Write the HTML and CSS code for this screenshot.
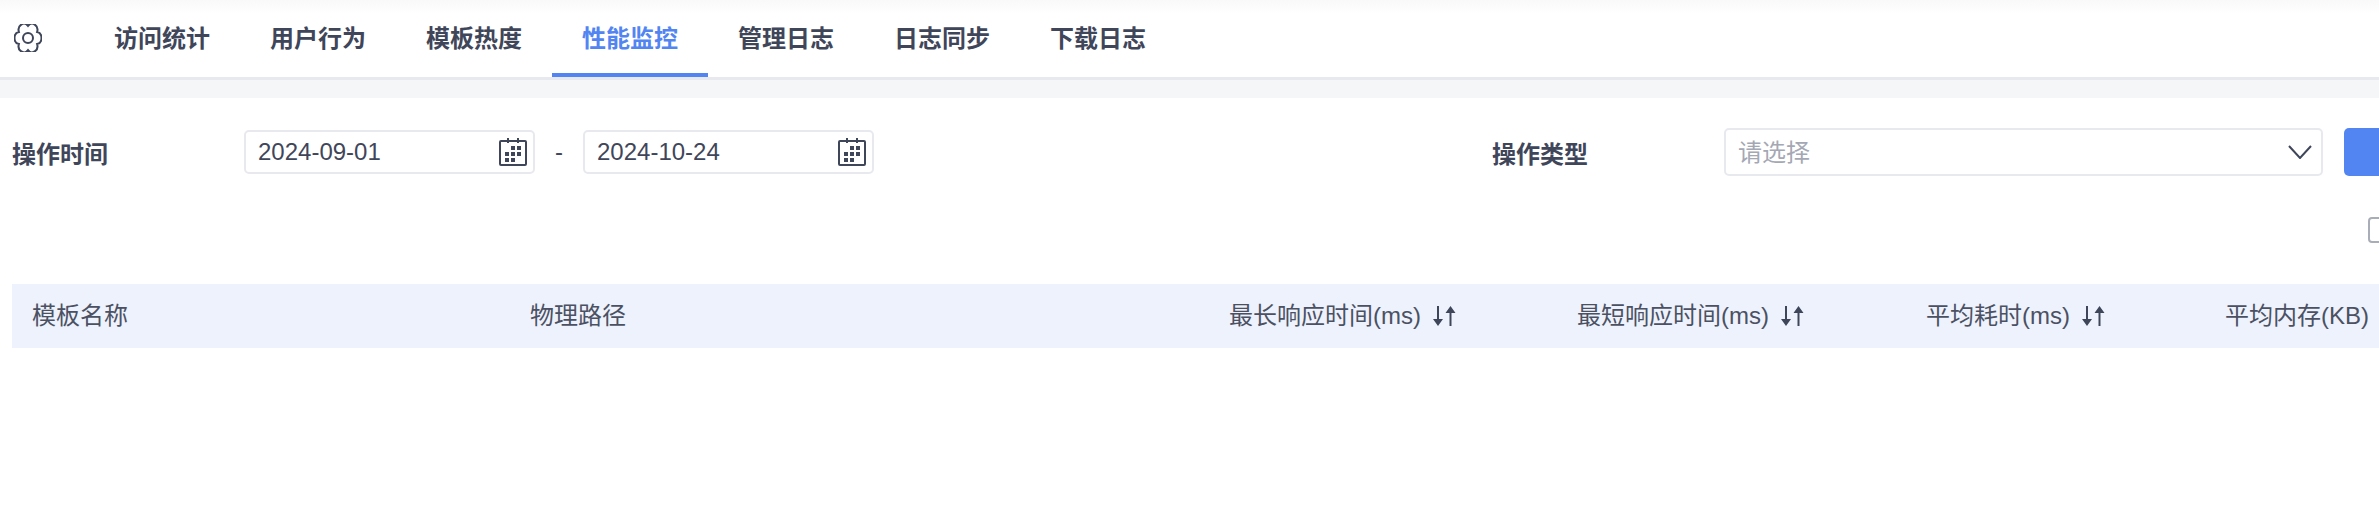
FILE: index.html
```html
<!DOCTYPE html>
<html lang="zh-CN">
  <head>
    <meta charset="UTF-8" />
    <title>性能监控</title>
    <link rel="stylesheet" href="styles.css">
  </head>
  <body>
    <div class="top-nav">
      <svg class="gear-icon" width="28" height="28" viewBox="0 0 28 28">
        <path d="M23.09 7.96A5.33 6.13 0 0 1 23.09 20.04A5.33 6.13 0 0 1 14 26.08A5.33 6.13 0 0 1 4.91 20.04A5.33 6.13 0 0 1 4.91 7.96A5.33 6.13 0 0 1 14 1.92A5.33 6.13 0 0 1 23.09 7.96Z" />
        <circle cx="14" cy="14" r="5" />
      </svg>
      <div class="nav-item">访问统计</div>
      <div class="nav-item">用户行为</div>
      <div class="nav-item">模板热度</div>
      <div class="nav-item active">性能监控</div>
      <div class="nav-item">管理日志</div>
      <div class="nav-item">日志同步</div>
      <div class="nav-item">下载日志</div>
    </div>
    <div class="band"></div>

    <div class="filter-row">
      <div class="filter-label">操作时间</div>
      <div class="date-input">
        <span>2024-09-01</span>
        <svg class="calendar-icon" width="28" height="28" viewBox="0 0 28 28">
          <rect class="cal-frame" x="1" y="3" width="26" height="24" rx="1" />
          <path class="cal-frame" d="M9 0V5M19 0V5" />
          <path class="cal-dots" d="M12 8h4v4h-4zM18 8h4v4h-4zM6 14h4v4h-4zM12 14h4v4h-4zM18 14h4v4h-4zM6 20h4v4h-4zM12 20h4v4h-4z" />
        </svg>
      </div>
      <div class="date-sep">-</div>
      <div class="date-input">
        <span>2024-10-24</span>
        <svg class="calendar-icon" width="28" height="28" viewBox="0 0 28 28">
          <rect class="cal-frame" x="1" y="3" width="26" height="24" rx="1" />
          <path class="cal-frame" d="M9 0V5M19 0V5" />
          <path class="cal-dots" d="M12 8h4v4h-4zM18 8h4v4h-4zM6 14h4v4h-4zM12 14h4v4h-4zM18 14h4v4h-4zM6 20h4v4h-4zM12 20h4v4h-4z" />
        </svg>
      </div>
      <div class="filter-label second">操作类型</div>
      <div class="select-box">
        <span class="placeholder">请选择</span>
        <svg class="chevron" width="24" height="14" viewBox="0 0 24 14">
          <path d="M1 1L12 13L23 1" />
        </svg>
      </div>
      <button class="search-button"></button>
    </div>

    <div class="check-row">
      <span class="check-box"></span>
    </div>

    <div class="table-head">
      <div class="head-cell">模板名称</div>
      <div class="head-cell">物理路径</div>
      <div class="head-cell">最长响应时间(ms)
        <svg class="sort-icon" width="23" height="20" viewBox="0 0 23 20"><path d="M4 0h2v13h4l-5 7l-5-7h4zM16.5 20h2V7h4l-5-7l-5 7h4z" /></svg>
      </div>
      <div class="head-cell">最短响应时间(ms)
        <svg class="sort-icon" width="23" height="20" viewBox="0 0 23 20"><path d="M4 0h2v13h4l-5 7l-5-7h4zM16.5 20h2V7h4l-5-7l-5 7h4z" /></svg>
      </div>
      <div class="head-cell">平均耗时(ms)
        <svg class="sort-icon" width="23" height="20" viewBox="0 0 23 20"><path d="M4 0h2v13h4l-5 7l-5-7h4zM16.5 20h2V7h4l-5-7l-5 7h4z" /></svg>
      </div>
      <div class="head-cell">平均内存(KB)</div>
    </div>
  </body>
</html>
```

FILE: styles.css
```css
html,
body {
  height: 100%;
}
body {
  font-family: "Liberation Sans", "Noto Sans CJK SC", sans-serif;
  font-size: 24px;
  margin: 0;
  color: #3f465a;
  background: white;
  overflow: hidden;
}
.top-nav {
  display: flex;
  height: 77px;
  padding-left: 14px;
  background: linear-gradient(#f9f9fa, white 14px);
  border-bottom: 3px solid #e8e9ef;
}
.gear-icon {
  flex: none;
  margin: 24px 42px 0 0;
  fill: none;
  stroke: #3f465a;
  stroke-width: 2;
}
.nav-item {
  flex: none;
  height: 73px;
  width: 156px;
  padding-top: 22px;
  box-sizing: border-box;
  line-height: 33px;
  text-align: center;
  font-weight: bold;
}
.nav-item.active {
  color: #5285f2;
  border-bottom: 4px solid #5285f2;
  height: 77px;
}
.band {
  height: 18px;
  background-color: #f5f6f8;
}
.filter-row {
  display: flex;
  align-items: center;
  height: 48px;
  margin-top: 30px;
  padding-left: 12px;
  width: 2500px;
}
.filter-label {
  flex: none;
  width: 232px;
  font-weight: bold;
}
.filter-label.second {
  margin-left: 618px;
}
.date-input {
  flex: none;
  display: flex;
  align-items: center;
  justify-content: space-between;
  box-sizing: border-box;
  width: 291px;
  height: 44px;
  padding: 0 6px 0 12px;
  border: 2px solid #e8e9ef;
  border-radius: 5px;
}
.calendar-icon {
  flex: none;
}
.cal-frame {
  fill: none;
  stroke: #3f465a;
  stroke-width: 2;
}
.cal-dots {
  fill: #3f465a;
}
.date-sep {
  flex: none;
  width: 48px;
  text-align: center;
}
.select-box {
  flex: none;
  display: flex;
  align-items: center;
  justify-content: space-between;
  box-sizing: border-box;
  width: 599px;
  height: 48px;
  padding: 0 9px 0 12px;
  border: 2px solid #e8e9ef;
  border-radius: 5px;
}
.placeholder {
  padding-bottom: 3px;
  color: #a4a8b4;
}
.chevron {
  fill: none;
  stroke: #3f465a;
  stroke-width: 2;
}
.search-button {
  flex: none;
  width: 100px;
  height: 48px;
  margin-left: 21px;
  border: none;
  border-radius: 5px;
  background-color: #5285f2;
}
.check-row {
  display: flex;
  height: 26px;
  margin-top: 41px;
  padding-left: 2368px;
  width: 100px;
}
.check-box {
  flex: none;
  box-sizing: border-box;
  width: 26px;
  height: 26px;
  border: 2px solid #a9adb8;
  border-radius: 4px;
}
.table-head {
  display: grid;
  grid-template-columns: 497px 699px 348px 349px 299px 300px;
  align-items: center;
  height: 64px;
  margin: 41px 0 0 12px;
  background-color: #eef2fc;
  width: 2492px;
}
.head-cell {
  display: flex;
  align-items: center;
  padding-left: 21px;
  padding-bottom: 5px;
  white-space: nowrap;
  color: #4b5163;
}
.head-cell:first-child {
  padding-left: 20px;
}
.sort-icon {
  flex: none;
  margin: 5px 0 0 12px;
  fill: #3f465a;
}
```
